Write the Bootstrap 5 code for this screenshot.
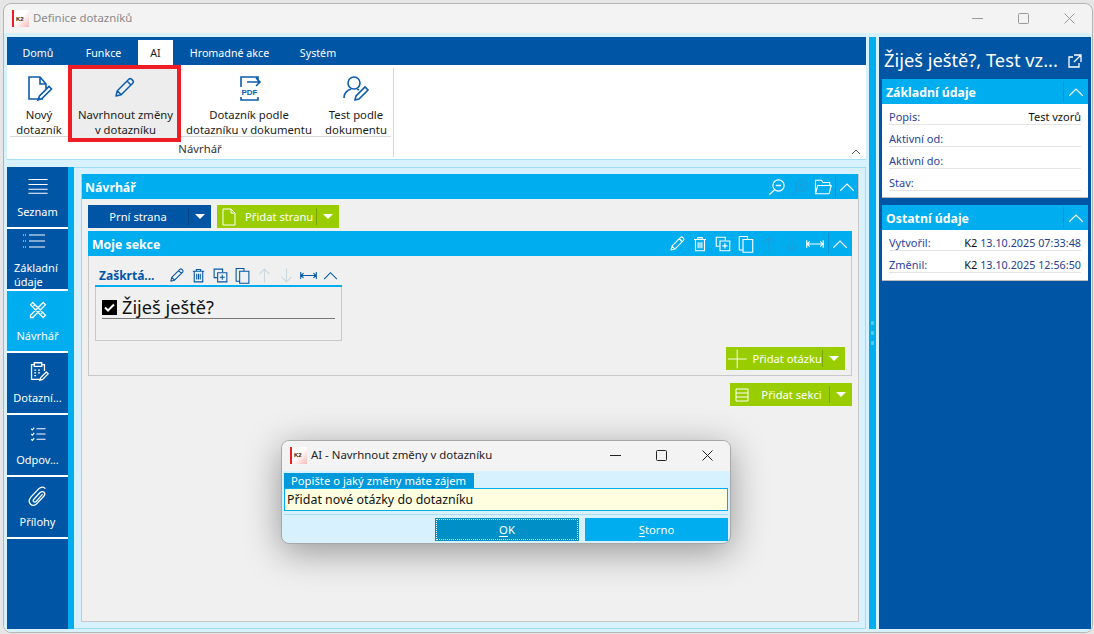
<!DOCTYPE html>
<html lang="cs">
<head>
<meta charset="utf-8">
<title>Definice dotazníků</title>
<link href="https://cdn.jsdelivr.net/npm/bootstrap@5.3.0/dist/css/bootstrap.min.css" rel="stylesheet">
<style>
html,body{height:100%;margin:0}
body{background:#e6e6e6;font-family:"Noto Sans","Open Sans",sans-serif;font-size:11.3px;color:#1c1c1c;overflow:hidden;position:relative;line-height:1.25}
.app-win{position:relative;height:630px;width:1090px;margin:3px 0 0 3px;border:1px solid #b4b4b4;border-radius:8px;overflow:hidden;background:#f3f3f3}
.win-title{height:29px;flex:none;padding-left:8px;color:#8a8a8a;font-size:11.4px}
.k2-logo{width:17px;height:17px;flex:none;display:flex;align-items:center;border-left:2px solid #ee1c25;background:linear-gradient(135deg,#fff 45%,#f6b9b9 100%);font:700 6px/1 "Liberation Sans",sans-serif;color:#222;padding-left:2px;margin-right:4px}
.win-ctl{width:46px;height:29px;display:flex;align-items:center;justify-content:center}
.win-client{background:#d8f1ff;padding:4px 2px 3px 3px;min-height:0}
.main-col{width:862px;flex:none}
.tab-strip{height:28px;background:#0055a5;color:#fff;padding:3px 0 0 0;font-size:10.7px;flex:none;margin-right:3px}
.tab-item{padding-top:7px;text-align:center;height:25px}
.tab-on{background:#fff;color:#1c1c1c}
.rib-body{height:95px;background:#fff;border-bottom:1px solid #a6dff7;margin:0 3px 7px 0;position:relative;flex:none}
.rib-group{width:386px;flex:none}
.rib-sep{width:1px;height:89px;margin-top:3px;background:#d8d8d8;flex:none}
.rib-btns{height:72px;margin:0 0 0 3px;border-bottom:1px solid #d8d8d8;width:381px}
.rib-btn{text-align:center;line-height:15px;font-size:11.3px;padding-top:8px;white-space:nowrap;flex:none}
.rib-btn svg{display:block;margin:0 auto 4px;width:30px;height:30px}
.rib-hl{background:#ededed;outline:4px solid #ee1c25;outline-offset:-4px;height:77px;padding-left:2px}
.rib-cap{text-align:center;padding-top:5px;color:#333;width:386px}
.rib-collapse{position:absolute;right:5px;bottom:3px}
.lower{min-height:0}
.nav-col{width:61px;background:#fff;flex:none}
.nav-cell{height:62px;background:#0055a5;color:#fff;text-align:center;font-size:11px;line-height:14px;border-bottom:2px solid #fff;padding-top:7px}
.nav-cell svg{display:block;margin:0 auto 7px;width:24px;height:24px}
.nav-two{text-align:left;padding:2px 0 0 7px;line-height:13.5px}
.nav-two svg{height:20px;margin:0 0 10px 8px}
.nav-on{background:#00adef}
.nav-fill{background:#0055a5;flex:1}
.nav-strip{width:6px;background:#00adef;flex:none}
.work{background:#d8f1ff;border-top:1px solid #9fdcf8;border-right:1px solid #9fdcf8;border-bottom:1px solid #9fdcf8;padding:6px 6px 6px 7px;min-width:0;width:792px}
.pane{background:#f0f0f0;border:1px solid #c8c8c8;border-top:0;height:100%}
.head-bar{background:#00adef;color:#fff;height:25px;font-weight:700;font-size:12.3px;flex:none}
.head-bar .ttl{padding:2px 0 0 3px;flex:1}
.head-tight{padding-right:1px}
.head-tight .sep-cell{margin-left:2px}
.head-tight .ttl{padding-left:4px}
.ico-cell{width:23px;height:25px;display:flex;align-items:center;justify-content:center;flex:none}
.ico-cell svg{width:18px;height:18px}
.sep-cell{border-left:1px solid #0a95d4;width:23px;height:21px;display:flex;align-items:center;justify-content:center;margin-left:1px}
.sep-cell svg{width:18px;height:18px}
.head-bar .faint{color:#1f9cd8}
.q-head .faint{color:#ccd8e0}
.pane-in{padding:6px 6px 0 6px}
.btn-pair{gap:6px}
.split-btn{height:23px;color:#fff;font-size:11.2px;display:flex;align-items:center;white-space:nowrap}
.split-blue{background:#0055a5;width:123px}
.split-green{background:#9acd00}
.split-btn .drop{width:23px;height:17px;border-left:1px solid rgba(0,0,0,.2);display:flex;align-items:center;justify-content:center;flex:none}
.tri{width:0;height:0;border-left:5px solid transparent;border-right:5px solid transparent;border-top:5px solid #fff}
.sect-gap{margin-top:3px}
.sect-box{border:1px solid #c8c8c8;border-top:0;height:120px;padding:12px 6px 0 6px}
.q-wrap{width:247px}
.q-head{height:19px;border-bottom:2px solid #00adef;color:#0055a5;font-weight:700;font-size:12px;padding-bottom:2px}
.q-head .ttl{padding-left:4px;width:70px;white-space:nowrap;flex:none}
.q-head .ico-cell{width:22px;height:17px}
.q-head .ico-cell svg{width:17px;height:17px}
.q-box{border:1px solid #c8c8c8;border-top:0;height:54px;padding:9px 6px 0 6px}
.q-line{border-bottom:1px solid #777;height:23px;width:233px;font-size:18.2px;line-height:22px;color:#111}
.q-check{width:15px;height:15px;background:#000;display:flex;align-items:center;justify-content:center;margin-right:5px;flex:none}
.side-split{width:7px;background:#00adef;margin-left:0;flex:none;gap:6px}
.side-split i{display:block;width:3px;height:4px;background:#59c9f4;border-radius:1px}
.side-pane{width:212px;background:#0055a5;margin-left:3px;flex:none;padding:0 3px}
.side-ttl{height:42px;color:#fff;font-size:18.3px;white-space:nowrap;padding:5px 0 0 2px}
.pop-ico{margin-right:6px}
.info-card{background:#fff;margin-bottom:7px;border-bottom:1px solid #bbb}
.info-card .head-bar .ttl{padding-left:4px}
.info-card .head-bar .sep-cell{width:25px}
.info-body{padding:3px 7px 3px 7px;font-size:11px}
.info-row{height:22px;border-bottom:1px solid #e4e4e4;color:#2b3f9a;align-items:flex-end;line-height:14px}
.info-row-first{height:18px}
.info-val{color:#111}
.info-date{color:#24418c;font-size:10.8px}
.dlg{position:absolute;left:281px;top:440px;width:450px;height:104px;background:#d8f1ff;border:1px solid #a8a8a8;border-radius:8px;box-shadow:0 8px 36px rgba(0,0,0,.38);overflow:hidden}
.dlg-title{height:30px;background:#f3f3f3;padding:0 0 2px 8px;font-size:11.4px;color:#222}
.dlg-title .win-ctl{width:46px;height:28px}
.dlg-tab{display:block;background:#0099dc;color:#fff;height:15px;line-height:16px;width:190px;padding-left:7px;font-size:11.25px;margin:2px 0 0 2px}
.dlg-input{display:block;width:444px;margin-left:2px;height:23px;border:1px solid #00adef;background:#ffffe0;font-size:12.4px;line-height:22px;padding:0 2px;color:#111}
.dlg-rule{border-top:1px solid #a6dff7;margin:3px 2px 3px 2px}
.dlg-btn{height:23px;color:#fff;background:#00adef;font-size:11.3px;display:flex;align-items:center;justify-content:center;padding-top:1px}
.dlg-ok{width:144px;background:#0090c8;border:2px solid #0090c8;outline:1px dotted #fff;outline-offset:-2px;margin-right:6px}
.dlg-no{width:143px;margin-right:2px}
.dlg-btn u{text-underline-offset:2px}
</style>
</head>
<body>
<svg width="0" height="0" class="position-absolute">
<defs>
<symbol id="pen" viewBox="0 0 24 24"><path d="M4 20l1.300-5.200L16.800 3.300a2 2 0 0 1 2.800 0l1.100 1.100a2 2 0 0 1 0 2.800L9.200 18.700zM5.300 14.800l3.900 3.900M15 5l4 4" fill="none" stroke="currentColor" stroke-width="1.500" stroke-linejoin="round"/></symbol>
<symbol id="bin" viewBox="0 0 24 24"><path d="M4 6h16M9 6V3.500h6V6M6 6v15h12V6M9.500 9.500v8M12 9.500v8M14.500 9.500v8" fill="none" stroke="currentColor" stroke-width="1.500"/></symbol>
<symbol id="dupadd" viewBox="0 0 24 24"><path d="M15 7V3H3v12h4M8 8h13v13H8zM14.500 11v7M11 14.500h7" fill="none" stroke="currentColor" stroke-width="1.500"/></symbol>
<symbol id="dup" viewBox="0 0 24 24"><path d="M8 20H3V2h11v4M8 6h13v17H8z" fill="none" stroke="currentColor" stroke-width="1.500"/></symbol>
<symbol id="up" viewBox="0 0 24 24"><path d="M12 22V3M5 10l7-7 7 7" fill="none" stroke="currentColor" stroke-width="1.500"/></symbol>
<symbol id="down" viewBox="0 0 24 24"><path d="M12 2v19M5 14l7 7 7-7" fill="none" stroke="currentColor" stroke-width="1.500"/></symbol>
<symbol id="wide" viewBox="0 0 24 24"><path d="M1 7v10M23 7v10M1 12h22M5 8.500L1.500 12 5 15.500M19 8.500l3.500 3.500-3.500 3.500" fill="none" stroke="currentColor" stroke-width="1.500"/></symbol>
<symbol id="chev" viewBox="0 0 24 24"><path d="M3 17l9-9 9 9" fill="none" stroke="currentColor" stroke-width="1.500"/></symbol>
<symbol id="zoom" viewBox="0 0 24 24"><circle cx="14" cy="10" r="7.500" fill="none" stroke="currentColor" stroke-width="1.500"/><path d="M9 15.500L2 22M10.500 10h7" fill="none" stroke="currentColor" stroke-width="1.800"/></symbol>
<symbol id="zoomp" viewBox="0 0 24 24"><circle cx="14" cy="10" r="7.500" fill="none" stroke="currentColor" stroke-width="1.500"/><path d="M9 15.500L2 22M10.500 10h7M14 6.500v7" fill="none" stroke="currentColor" stroke-width="1.800"/></symbol>
<symbol id="folder" viewBox="0 0 24 24"><path d="M2 21V3h8l2 3h9v4M2 21h18l3-11H5z" fill="none" stroke="currentColor" stroke-width="1.500"/></symbol>
</defs>
</svg>

<div class="app-win d-flex flex-column">
  <div class="win-title d-flex align-items-center">
    <span class="k2-logo">K2</span><span>Definice dotazníků</span>
    <div class="ms-auto d-flex">
      <span class="win-ctl"><svg width="11" height="11" viewBox="0 0 11 11"><path d="M0 5.500h11" stroke="#999"/></svg></span>
      <span class="win-ctl"><svg width="11" height="11" viewBox="0 0 11 11"><rect x=".5" y=".5" width="10" height="10" rx="1" fill="none" stroke="#999"/></svg></span>
      <span class="win-ctl"><svg width="11" height="11" viewBox="0 0 11 11"><path d="M.5.500l10 10M10.500.500l-10 10" stroke="#999"/></svg></span>
    </div>
  </div>

  <div class="win-client d-flex flex-grow-1">
    <div class="main-col d-flex flex-column">
      <div class="tab-strip d-flex">
        <div class="tab-item" style="width:62px">Domů</div>
        <div class="tab-item" style="width:69px">Funkce</div>
        <div class="tab-item tab-on" style="width:35px">AI</div>
        <div class="tab-item" style="width:113px">Hromadné akce</div>
        <div class="tab-item" style="width:64px">Systém</div>
      </div>
      <div class="rib-body d-flex">
        <div class="rib-group">
          <div class="rib-btns d-flex">
            <div class="rib-btn" style="width:58px">
              <svg viewBox="0 0 30 30" fill="none" stroke="#0b5cad" stroke-width="1.600"><path d="M19 26H5V4h11l6 7v5M16 4v7h6M14 27l1.500-4L25 13.500l2.500 2.500L18 25.500z"/></svg>
              Nový<br>dotazník
            </div>
            <div class="rib-btn rib-hl" style="width:113px">
              <svg viewBox="-1 -3 30 30" style="color:#0b5cad"><use href="#pen" width="24" height="24"/></svg>
              Navrhnout změny<br>v dotazníku
            </div>
            <div class="rib-btn" style="width:136px">
              <svg viewBox="0 0 30 30" fill="none" stroke="#0b5cad" stroke-width="1.600"><path d="M7 14V4h17v4M24 24v3H7v-3M13 9h13M22 5l4 4-4 4"/><text x="15.500" y="22" font-size="8" font-weight="700" fill="#0b5cad" stroke="none" text-anchor="middle" font-family="Liberation Sans, sans-serif">PDF</text></svg>
              Dotazník podle<br>dotazníku v dokumentu
            </div>
            <div class="rib-btn ps-1" style="width:74px">
              <svg viewBox="0 0 30 30" fill="none" stroke="#0b5cad" stroke-width="1.600"><circle cx="13" cy="10" r="6"/><path d="M3 25c0-6 4-8 7-9M16 16l2 1M14 27l1-4 9-9 3 3-9 9z"/></svg>
              Test podle<br>dokumentu
            </div>
          </div>
          <div class="rib-cap">Návrhář</div>
        </div>
        <div class="rib-sep"></div>
        <svg class="rib-collapse" width="10" height="8" viewBox="0 0 10 8"><path d="M1 6l4-4 4 4" fill="none" stroke="#555"/></svg>
      </div>

      <div class="lower d-flex flex-grow-1">
        <div class="nav-col d-flex flex-column">
          <div class="nav-cell"><svg viewBox="-3 -3 30 30" stroke="#fff" stroke-width="1.300"><path d="M0 4h24M0 10h24M0 16h24M0 21h24"/></svg>Seznam</div>
          <div class="nav-cell nav-two"><svg viewBox="0 0 24 20" fill="none" stroke="#fff" stroke-width="1"><path d="M7 4h16M7 10h16M7 16h16"/><path d="M1 4h3M1 10h3M1 16h3" stroke-dasharray="1 1"/></svg>Základní<br>údaje</div>
          <div class="nav-cell nav-on"><svg viewBox="-4 -4 32 32" fill="none" stroke="#fff" stroke-width="1.700"><path d="M5 2l17 17-3 3L2 5zM19 2l3 3-17 17H2v-3zM8 5l-2 2M18 15l-2 2"/></svg>Návrhář</div>
          <div class="nav-cell"><svg viewBox="-1 0 26 26" fill="none" stroke="#fff" stroke-width="1.400"><path d="M14 21H5V5h3M16 5h3v7M8 3h8v4H8zM8 11h2M12 11h2M8 14h2M12 14h2M8 17h2M14 22l1-3 6-6 2 2-6 6z"/></svg>Dotazní...</div>
          <div class="nav-cell"><svg viewBox="-4 -4 32 32" fill="none" stroke="#fff" stroke-width="1.500"><path d="M10 5h12M10 12h12M10 19h12M3 5l1.500 1.500L7 3.500M3 12l1.500 1.500L7 10.500M3 19l1.500 1.500L7 17.500"/></svg>Odpov...</div>
          <div class="nav-cell"><svg viewBox="-1 -1 26 26" fill="none" stroke="#fff" stroke-width="1.400"><path d="M20 4c-2-2.500-5-2-7 0L4.500 13c-2.500 3-2.500 6-.5 8s5 1.500 7-1l7-7.500c1.500-1.500 1.500-3.500.5-4.500s-3-1-4.500.5L7.500 15.500c-1 1-1 2 0 2.700s2 .3 2.700-.5L17 10"/></svg>Přílohy</div>
          <div class="nav-fill"></div>
        </div>
        <div class="nav-strip"></div>
        <div class="work">
          <div class="pane d-flex flex-column">
            <div class="head-bar d-flex align-items-center">
              <span class="ttl">Návrhář</span>
              <span class="ico-cell"><svg><use href="#zoom"/></svg></span>
              <span class="ico-cell faint"><svg><use href="#zoomp"/></svg></span>
              <span class="ico-cell"><svg><use href="#folder"/></svg></span>
              <span class="sep-cell"><svg><use href="#chev"/></svg></span>
            </div>
            <div class="pane-in">
              <div class="d-flex btn-pair">
                <div class="split-btn split-blue"><span class="flex-grow-1 text-center">Prní strana</span><span class="drop"><span class="tri"></span></span></div>
                <div class="split-btn split-green" style="width:122px">
                  <svg class="ms-1 me-2" width="16" height="18" viewBox="0 0 16 18" fill="none" stroke="#fff"><path d="M2 1h8l4 4v12H2zM10 1v4h4"/></svg>
                  <span class="flex-grow-1">Přidat stranu</span><span class="drop"><span class="tri"></span></span></div>
              </div>
              <div class="head-bar head-tight d-flex align-items-center sect-gap">
                <span class="ttl">Moje sekce</span>
                <span class="ico-cell"><svg><use href="#pen"/></svg></span>
                <span class="ico-cell"><svg><use href="#bin"/></svg></span>
                <span class="ico-cell"><svg><use href="#dupadd"/></svg></span>
                <span class="ico-cell"><svg><use href="#dup"/></svg></span>
                <span class="ico-cell faint"><svg><use href="#up"/></svg></span>
                <span class="ico-cell faint"><svg><use href="#down"/></svg></span>
                <span class="ico-cell"><svg><use href="#wide"/></svg></span>
                <span class="sep-cell"><svg><use href="#chev"/></svg></span>
              </div>
              <div class="sect-box">
                <div class="q-wrap">
                  <div class="q-head d-flex align-items-center">
                    <span class="ttl">Zaškrtá...</span>
                    <span class="ico-cell"><svg><use href="#pen"/></svg></span>
                    <span class="ico-cell"><svg><use href="#bin"/></svg></span>
                    <span class="ico-cell"><svg><use href="#dupadd"/></svg></span>
                    <span class="ico-cell"><svg><use href="#dup"/></svg></span>
                    <span class="ico-cell faint"><svg><use href="#up"/></svg></span>
                    <span class="ico-cell faint"><svg><use href="#down"/></svg></span>
                    <span class="ico-cell"><svg><use href="#wide"/></svg></span>
                    <span class="ico-cell"><svg><use href="#chev"/></svg></span>
                  </div>
                  <div class="q-box">
                    <div class="q-line d-flex align-items-center">
                      <span class="q-check"><svg width="11" height="9" viewBox="0 0 11 9"><path d="M1 4.500l3 3 6-6" fill="none" stroke="#fff" stroke-width="2"/></svg></span>Žiješ ještě?
                    </div>
                  </div>
                </div>
                <div class="d-flex justify-content-end" style="margin-top:6px">
                  <div class="split-btn split-green" style="width:119px">
                    <svg class="ms-0" width="24" height="20" viewBox="0 0 24 20" stroke="#fff"><path d="M2 10h20M12 0v20"/></svg>
                    <span class="flex-grow-1 ps-1">Přidat otázku</span><span class="drop"><span class="tri"></span></span></div>
                </div>
              </div>
              <div class="d-flex justify-content-end" style="margin-top:7px">
                <div class="split-btn split-green" style="width:122px">
                  <svg class="ms-1" width="16" height="16" viewBox="0 0 16 16" fill="none" stroke="#fff"><path d="M2 2h12v12H2zM2 6h12M2 10h12"/></svg>
                  <span class="flex-grow-1 text-center ps-1">Přidat sekci</span><span class="drop"><span class="tri"></span></span></div>
              </div>
            </div>
          </div>
        </div>
      </div>
    </div>

    <div class="side-split d-flex flex-column align-items-center justify-content-center"><i></i><i></i><i></i></div>

    <aside class="side-pane">
      <div class="side-ttl d-flex align-items-center justify-content-between">
        <span>Žiješ ještě?, Test vz...</span>
        <svg class="pop-ico" width="14" height="14" viewBox="0 0 14 14" fill="none" stroke="#fff" stroke-width="1.300"><path d="M5 3H1v10h10V9M6 1h7v7M13 1L6 8"/></svg>
      </div>
      <div class="info-card">
        <div class="head-bar d-flex align-items-center"><span class="ttl">Základní údaje</span><span class="sep-cell"><svg><use href="#chev"/></svg></span></div>
        <div class="info-body" style="padding-bottom:6px">
          <div class="info-row info-row-first d-flex justify-content-between"><span>Popis:</span><span class="info-val">Test vzorů</span></div>
          <div class="info-row d-flex"><span>Aktivní od:</span></div>
          <div class="info-row d-flex"><span>Aktivní do:</span></div>
          <div class="info-row d-flex"><span>Stav:</span></div>
        </div>
      </div>
      <div class="info-card">
        <div class="head-bar d-flex align-items-center"><span class="ttl">Ostatní údaje</span><span class="sep-cell"><svg><use href="#chev"/></svg></span></div>
        <div class="info-body" style="padding-bottom:7px">
          <div class="info-row info-row-first d-flex justify-content-between"><span>Vytvořil:</span><span><span class="info-val">K2</span> <span class="info-date">13.10.2025 07:33:48</span></span></div>
          <div class="info-row d-flex justify-content-between"><span>Změnil:</span><span><span class="info-val">K2</span> <span class="info-date">13.10.2025 12:56:50</span></span></div>
        </div>
      </div>
    </aside>
  </div>
</div>

<div class="dlg">
  <div class="dlg-title d-flex align-items-center">
    <span class="k2-logo">K2</span><span>AI - Navrhnout změny v dotazníku</span>
    <div class="ms-auto d-flex">
      <span class="win-ctl"><svg width="11" height="11" viewBox="0 0 11 11"><path d="M0 5.500h11" stroke="#222"/></svg></span>
      <span class="win-ctl"><svg width="11" height="11" viewBox="0 0 11 11"><rect x=".5" y=".5" width="10" height="10" rx="1" fill="none" stroke="#222"/></svg></span>
      <span class="win-ctl"><svg width="11" height="11" viewBox="0 0 11 11"><path d="M.5.500l10 10M10.500.500l-10 10" stroke="#222"/></svg></span>
    </div>
  </div>
  <span class="dlg-tab">Popište o jaký změny máte zájem</span>
  <div class="dlg-input">Přidat nové otázky do dotazníku</div>
  <div class="dlg-rule"></div>
  <div class="d-flex justify-content-end">
    <div class="dlg-btn dlg-ok"><span><u>O</u>K</span></div>
    <div class="dlg-btn dlg-no"><span><u>S</u>torno</span></div>
  </div>
</div>
<script src="https://cdn.jsdelivr.net/npm/bootstrap@5.3.0/dist/js/bootstrap.bundle.min.js"></script>
</body>
</html>
